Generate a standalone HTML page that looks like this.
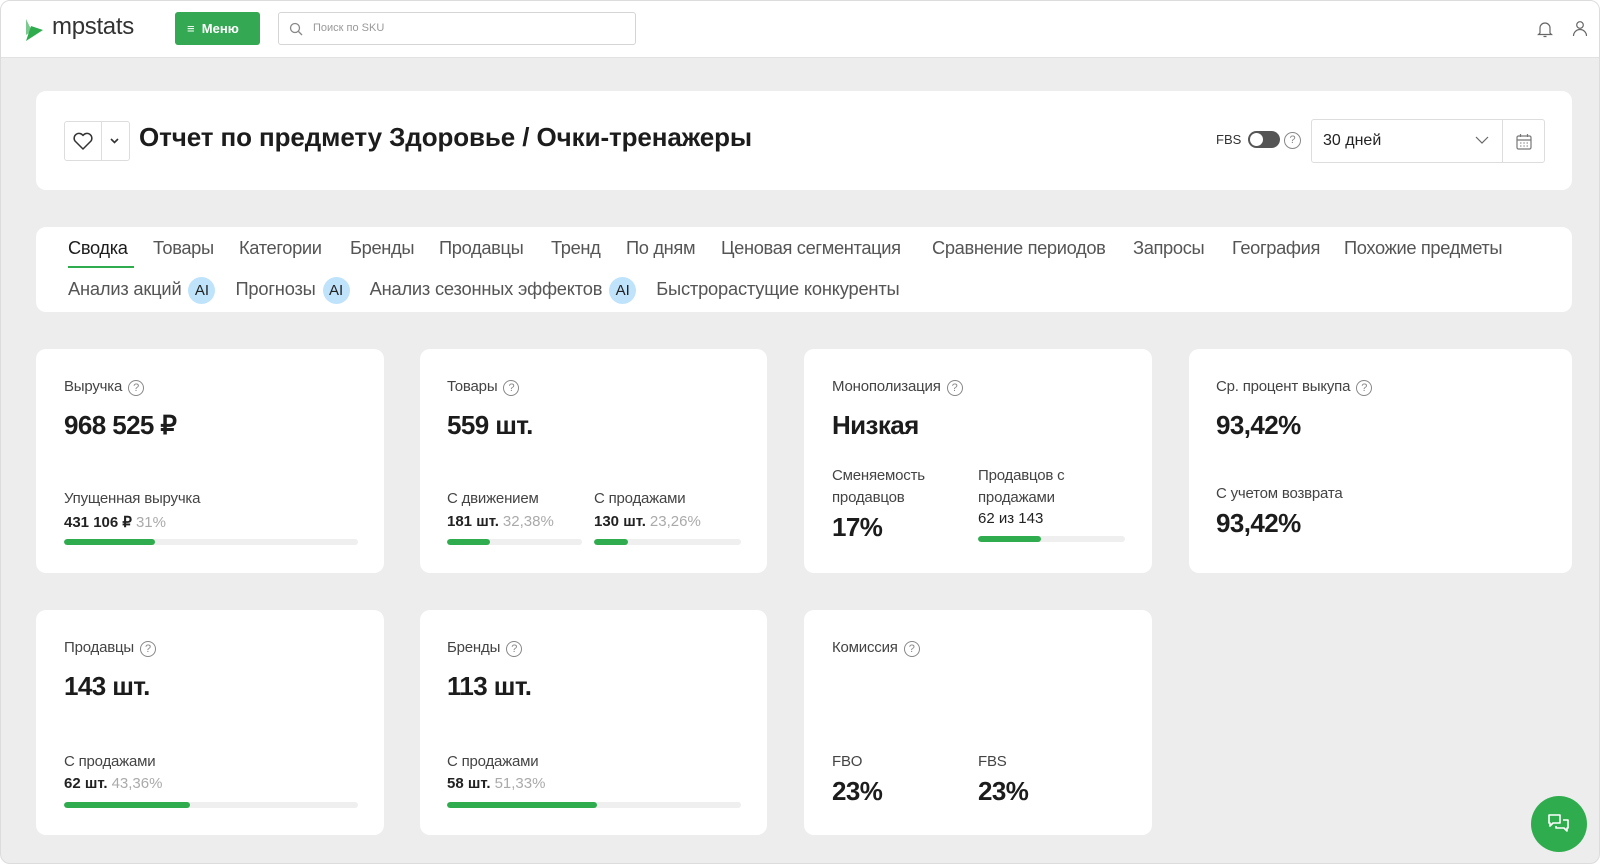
<!DOCTYPE html>
<html><head><meta charset="utf-8"><style>
*{box-sizing:border-box;margin:0;padding:0}
body{width:1608px;height:866px;overflow:hidden;background:#fff;font-family:"Liberation Sans",Arial,sans-serif;color:#222;position:relative}
.frame{position:absolute;left:0;top:0;width:1600px;height:864px;background:#ededed;border:1px solid #dcdcdc;border-radius:10px;overflow:hidden}
.hdr{position:absolute;left:0;top:0;width:100%;height:57px;background:#fff;border-bottom:1px solid #e2e2e2}
.abs{position:absolute}
.card{position:absolute;background:#fff;border-radius:10px}
.tab{position:absolute;font-size:18.3px;color:#555;white-space:nowrap;letter-spacing:-0.35px}
.row2{position:absolute;left:32px;top:50px;font-size:18.3px;color:#555;white-space:nowrap;letter-spacing:-0.2px}
.ai{display:inline-block;width:27px;height:27px;border-radius:50%;background:#bfe3fb;font-size:15px;color:#222;text-align:center;line-height:27px;letter-spacing:0;margin:0 20px 0 7px;vertical-align:0px}
.lbl{position:absolute;font-size:15px;color:#444;white-space:nowrap;letter-spacing:-0.2px}
.q{display:inline-block;width:16px;height:16px;border:1.3px solid #888;border-radius:50%;font-size:11px;line-height:14px;text-align:center;color:#888;vertical-align:0px;margin-left:6px}
.big{position:absolute;font-size:26px;font-weight:bold;color:#1c1c1c;white-space:nowrap;letter-spacing:-0.6px}
.sv{position:absolute;font-size:15px;font-weight:bold;color:#222;white-space:nowrap}
.sv span{font-weight:normal;color:#aaa;margin-left:4px}
.bar{position:absolute;height:6px;border-radius:3px;background:#efefef;overflow:hidden}
.bar i{display:block;height:100%;background:#2fad4e;border-radius:3px}
</style></head><body>
<div class="frame">
<div class="hdr">
 <svg class="abs" style="left:22px;top:16px" width="22" height="26" viewBox="0 0 22 26"><path d="M3 2 L3 18 L9 14 Z" fill="#7cc98f"/><path d="M3 24 L20 13 L8 9 Z" fill="#2fad4e"/></svg>
 <div class="abs" style="left:51px;top:12px;font-size:24px;color:#333;letter-spacing:-0.3px">mpstats</div>
 <div class="abs" style="left:174px;top:11px;width:85px;height:33px;background:#34a853;border-radius:3px;color:#fff;font-size:13px;font-weight:bold;line-height:33px;padding-left:12px">&#8801;&nbsp; Меню</div>
 <div class="abs" style="left:277px;top:11px;width:358px;height:33px;border:1px solid #d5d5d5;border-radius:3px">
  <svg class="abs" style="left:10px;top:9px" width="14" height="14" viewBox="0 0 14 14"><circle cx="6" cy="6" r="4.5" fill="none" stroke="#888" stroke-width="1.3"/><path d="M9.5 9.5L13 13" stroke="#888" stroke-width="1.3"/></svg>
  <div class="abs" style="left:34px;top:9px;font-size:11px;color:#999">Поиск по SKU</div>
 </div>
 <svg class="abs" style="left:1536px;top:19px" width="16" height="18" viewBox="0 0 16 18"><path d="M3 13 V8 a5 5 0 0 1 10 0 V13 L14.5 14.5 H1.5 Z" fill="none" stroke="#666" stroke-width="1.2"/><path d="M6.5 16.5 H9.5" stroke="#666" stroke-width="1.2"/></svg>
 <svg class="abs" style="left:1571px;top:19px" width="16" height="17" viewBox="0 0 16 17"><circle cx="8" cy="5" r="3.3" fill="none" stroke="#666" stroke-width="1.2"/><path d="M1.5 16 a6.5 6.5 0 0 1 13 0" fill="none" stroke="#666" stroke-width="1.2"/></svg>
</div>

<div class="card" style="left:35px;top:90px;width:1536px;height:99px">
 <div class="abs" style="left:28px;top:30px;width:66px;height:40px;border:1px solid #ddd;border-radius:3px"></div>
 <div class="abs" style="left:65px;top:30px;width:1px;height:40px;background:#ddd"></div>
 <svg class="abs" style="left:36px;top:41px" width="22" height="19" viewBox="0 0 22 19"><path d="M11 17 L3 9 A4.5 4.5 0 0 1 11 3.5 A4.5 4.5 0 0 1 19 9 Z" fill="none" stroke="#333" stroke-width="1.5" stroke-linejoin="round"/></svg>
 <svg class="abs" style="left:73px;top:46px" width="11" height="8" viewBox="0 0 11 8"><path d="M2 2 L5.5 5.5 L9 2" fill="none" stroke="#333" stroke-width="1.6"/></svg>
 <div class="abs" style="left:103px;top:31px;font-size:26px;font-weight:bold;color:#1c1c1c;letter-spacing:-0.1px;white-space:nowrap">Отчет по предмету Здоровье / Очки-тренажеры</div>
 <div class="abs" style="left:1180px;top:41px;font-size:13px;color:#333">FBS</div>
 <div class="abs" style="left:1212px;top:40px;width:32px;height:17px;border-radius:9px;background:#555"><div style="position:absolute;left:2px;top:2px;width:13px;height:13px;border-radius:50%;background:#fff"></div></div>
 <div class="abs" style="left:1248px;top:39px"><span class="q" style="width:17px;height:17px;margin:0">?</span></div>
 <div class="abs" style="left:1275px;top:28px;width:192px;height:44px;border:1px solid #ddd;border-radius:3px 0 0 3px">
  <div class="abs" style="left:11px;top:12px;font-size:16px;color:#222">30 дней</div>
  <svg class="abs" style="left:163px;top:16px" width="14" height="9" viewBox="0 0 14 9"><path d="M1 1 L7 7 L13 1" fill="none" stroke="#666" stroke-width="1.2"/></svg>
 </div>
 <div class="abs" style="left:1466px;top:28px;width:43px;height:44px;border:1px solid #ddd;border-radius:0 3px 3px 0">
  <svg class="abs" style="left:13px;top:13px" width="16" height="17" viewBox="0 0 16 17"><rect x="1" y="3" width="14" height="13" rx="1.5" fill="none" stroke="#777" stroke-width="1.2"/><path d="M1 7 H15 M4.5 1 V4 M11.5 1 V4" stroke="#777" stroke-width="1.2"/><path d="M4 10h1.5M7.3 10h1.5M10.5 10h1.5M4 13h1.5M7.3 13h1.5M10.5 13h1.5" stroke="#999" stroke-width="1.2"/></svg>
 </div>
</div>

<div class="card" style="left:35px;top:226px;width:1536px;height:85px">
 <div class="tab" style="left:32px;top:10px;color:#1c1c1c">Сводка</div>
 <div class="abs" style="left:32px;top:39px;width:66px;height:2px;background:#2fad4e"></div>
 <div class="tab" style="left:117px;top:10px">Товары</div>
 <div class="tab" style="left:203px;top:10px">Категории</div>
 <div class="tab" style="left:314px;top:10px">Бренды</div>
 <div class="tab" style="left:403px;top:10px">Продавцы</div>
 <div class="tab" style="left:515px;top:10px">Тренд</div>
 <div class="tab" style="left:590px;top:10px">По дням</div>
 <div class="tab" style="left:685px;top:10px">Ценовая сегментация</div>
 <div class="tab" style="left:896px;top:10px">Сравнение периодов</div>
 <div class="tab" style="left:1097px;top:10px">Запросы</div>
 <div class="tab" style="left:1196px;top:10px">География</div>
 <div class="tab" style="left:1308px;top:10px">Похожие предметы</div>
 <div class="row2">Анализ акций<span class="ai">AI</span>Прогнозы<span class="ai">AI</span>Анализ сезонных эффектов<span class="ai">AI</span>Быстрорастущие конкуренты</div>
</div>

<!-- row 1 -->
<div class="card" style="left:35px;top:348px;width:348px;height:224px">
 <div class="lbl" style="left:28px;top:29px">Выручка<span class="q">?</span></div>
 <div class="big" style="left:28px;top:61px">968 525 ₽</div>
 <div class="lbl" style="left:28px;top:141px">Упущенная выручка</div>
 <div class="sv" style="left:28px;top:164px">431 106 ₽<span>31%</span></div>
 <div class="bar" style="left:28px;top:190px;width:294px"><i style="width:31%"></i></div>
</div>
<div class="card" style="left:419px;top:348px;width:347px;height:224px">
 <div class="lbl" style="left:27px;top:29px">Товары<span class="q">?</span></div>
 <div class="big" style="left:27px;top:61px">559 шт.</div>
 <div class="lbl" style="left:27px;top:141px">С движением</div>
 <div class="sv" style="left:27px;top:164px">181 шт.<span>32,38%</span></div>
 <div class="bar" style="left:27px;top:190px;width:135px"><i style="width:32%"></i></div>
 <div class="lbl" style="left:174px;top:141px">С продажами</div>
 <div class="sv" style="left:174px;top:164px">130 шт.<span>23,26%</span></div>
 <div class="bar" style="left:174px;top:190px;width:147px"><i style="width:23%"></i></div>
</div>
<div class="card" style="left:803px;top:348px;width:348px;height:224px">
 <div class="lbl" style="left:28px;top:29px">Монополизация<span class="q">?</span></div>
 <div class="big" style="left:28px;top:61px">Низкая</div>
 <div class="lbl" style="left:28px;top:116px;line-height:22px">Сменяемость<br>продавцов</div>
 <div class="big" style="left:28px;top:163px">17%</div>
 <div class="lbl" style="left:174px;top:116px;line-height:22px">Продавцов с<br>продажами</div>
 <div class="sv" style="left:174px;top:161px;font-weight:normal;color:#222">62 из 143</div>
 <div class="bar" style="left:174px;top:187px;width:147px"><i style="width:43%"></i></div>
</div>
<div class="card" style="left:1188px;top:348px;width:383px;height:224px">
 <div class="lbl" style="left:27px;top:29px">Ср. процент выкупа<span class="q">?</span></div>
 <div class="big" style="left:27px;top:61px">93,42%</div>
 <div class="lbl" style="left:27px;top:136px">С учетом возврата</div>
 <div class="big" style="left:27px;top:159px">93,42%</div>
</div>

<!-- row 2 -->
<div class="card" style="left:35px;top:609px;width:348px;height:225px">
 <div class="lbl" style="left:28px;top:29px">Продавцы<span class="q">?</span></div>
 <div class="big" style="left:28px;top:61px">143 шт.</div>
 <div class="lbl" style="left:28px;top:143px">С продажами</div>
 <div class="sv" style="left:28px;top:165px">62 шт.<span>43,36%</span></div>
 <div class="bar" style="left:28px;top:192px;width:294px"><i style="width:43%"></i></div>
</div>
<div class="card" style="left:419px;top:609px;width:347px;height:225px">
 <div class="lbl" style="left:27px;top:29px">Бренды<span class="q">?</span></div>
 <div class="big" style="left:27px;top:61px">113 шт.</div>
 <div class="lbl" style="left:27px;top:143px">С продажами</div>
 <div class="sv" style="left:27px;top:165px">58 шт.<span>51,33%</span></div>
 <div class="bar" style="left:27px;top:192px;width:294px"><i style="width:51%"></i></div>
</div>
<div class="card" style="left:803px;top:609px;width:348px;height:225px">
 <div class="lbl" style="left:28px;top:29px">Комиссия<span class="q">?</span></div>
 <div class="lbl" style="left:28px;top:143px">FBO</div>
 <div class="big" style="left:28px;top:166px">23%</div>
 <div class="lbl" style="left:174px;top:143px">FBS</div>
 <div class="big" style="left:174px;top:166px">23%</div>
</div>

<div class="abs" style="left:1530px;top:795px;width:56px;height:56px;border-radius:50%;background:#2fad4e">
 <svg class="abs" style="left:16px;top:17px" width="24" height="22" viewBox="0 0 24 22"><path d="M2 2 H13 V10 H6 L3 13 V10 H2 Z" fill="none" stroke="#fff" stroke-width="1.6" stroke-linejoin="round"/><path d="M16 7 H21 V15 H20 V18 L17 15 H9 V13" fill="none" stroke="#fff" stroke-width="1.6" stroke-linejoin="round"/></svg>
</div>
</div>
</body></html>
